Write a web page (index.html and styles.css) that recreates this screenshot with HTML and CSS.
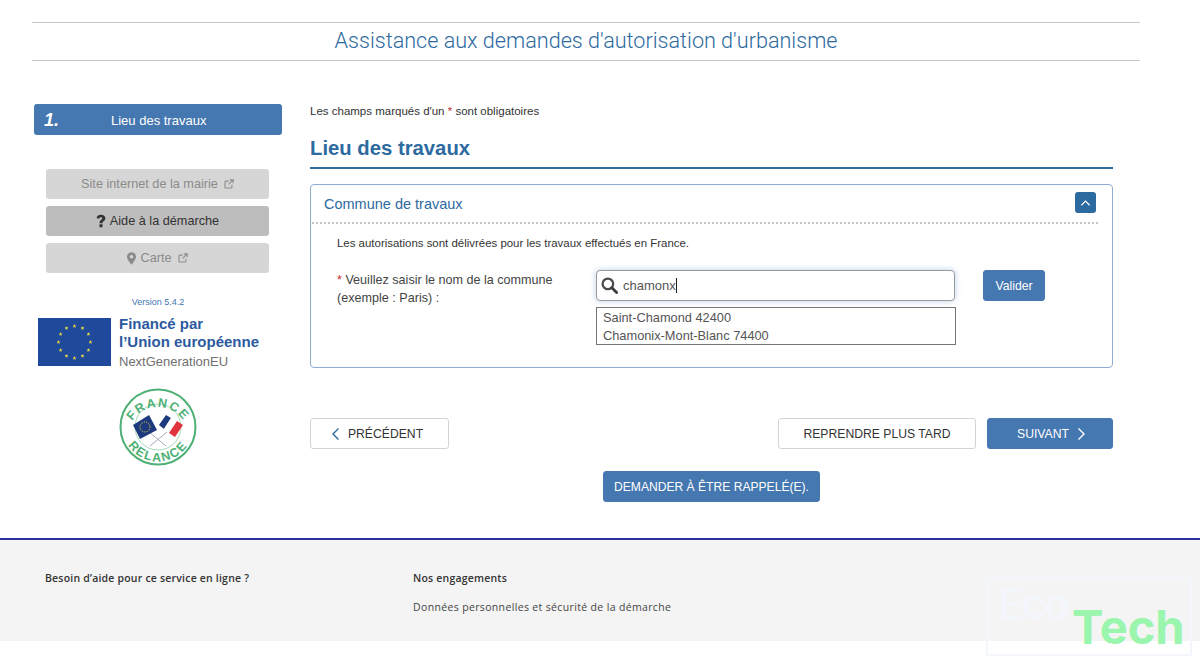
FILE: index.html
```html
<!DOCTYPE html>
<html lang="fr">
<head>
<meta charset="utf-8">
<title>Assistance aux demandes d'autorisation d'urbanisme</title>
<link rel="stylesheet" href="styles.css">
</head>
<body>
<header class="site-header"><h2 class="site-title">Assistance aux demandes d'autorisation d'urbanisme</h2></header>
<div class="layout">
  <aside class="sidebar">
    <div class="step"><span class="step-num">1.</span><span class="step-label">Lieu des travaux</span></div>
    <nav class="links">
      <a class="link muted">Site internet de la mairie <svg class="ext" viewBox="0 0 12 12"><path d="M9.5 7v3a.8.8 0 0 1-.8.8H2a.8.8 0 0 1-.8-.8V3.300A.8.8 0 0 1 2 2.500h3.500M7 1h4v4M11 1 5.500 6.500" fill="none" stroke="currentColor" stroke-width="1.300"/></svg></a>
      <a class="link strong"><svg class="q" viewBox="0 0 10 14"><path d="M.6 4.300C.6 2 2.500.7 4.900.7 7.400.7 9.400 2 9.400 4.200 9.400 6.900 6.500 6.900 6.500 9.200H3.500C3.500 5.900 6.200 5.900 6.200 4.300 6.200 3.600 5.700 3.200 4.900 3.200 4 3.200 3.600 3.700 3.500 4.600ZM3.500 10.300h3V13.300h-3Z" fill="currentColor"/></svg> Aide à la démarche</a>
      <a class="link muted"><svg class="pin" viewBox="0 0 10 14"><path fill-rule="evenodd" d="M5 0a5 5 0 0 1 5 5c0 2.800-3.200 6.700-5 9-1.800-2.300-5-6.200-5-9a5 5 0 0 1 5-5Zm0 3a2 2 0 1 0 0 4 2 2 0 0 0 0-4Z" fill="currentColor"/></svg> Carte <svg class="ext" viewBox="0 0 12 12"><path d="M9.500 7v3a.8.8 0 0 1-.8.8H2a.8.8 0 0 1-.8-.8V3.300A.8.8 0 0 1 2 2.500h3.500M7 1h4v4M11 1 5.500 6.500" fill="none" stroke="currentColor" stroke-width="1.300"/></svg></a>
    </nav>
    <p class="version">Version 5.4.2</p>
    <div class="eu">
      <svg class="eu-flag" viewBox="0 0 73 48">
        <defs><path id="eu-star" d="M0-2 .5-.6 2-.6.8.3 1.200 1.700 0 .9-1.200 1.700-.8.3-2-.6-.5-.6Z"/></defs>
        <rect width="73" height="48" fill="#1f4a9c"/>
        <g fill="#f6e43c">
          <use href="#eu-star" x="36.500" y="8"/><use href="#eu-star" x="44.500" y="10.100"/><use href="#eu-star" x="50.400" y="16"/><use href="#eu-star" x="52.500" y="24"/><use href="#eu-star" x="50.400" y="32"/><use href="#eu-star" x="44.500" y="37.900"/><use href="#eu-star" x="36.500" y="40"/><use href="#eu-star" x="28.500" y="37.900"/><use href="#eu-star" x="22.600" y="32"/><use href="#eu-star" x="20.500" y="24"/><use href="#eu-star" x="22.600" y="16"/><use href="#eu-star" x="28.500" y="10.100"/>
        </g>
      </svg>
      <div class="eu-text">
        <div class="eu-main">Financé par<br>l’Union européenne</div>
        <div class="eu-sub">NextGenerationEU</div>
      </div>
    </div>
    <svg class="relance" viewBox="0 0 78 78">
      <circle cx="39" cy="39" r="37.500" fill="#fff" stroke="#4eb075" stroke-width="2"/>
      <circle cx="39" cy="39" r="23" fill="none" stroke="#8fd0a8" stroke-width=".8"/>
      <defs>
        <path id="arc-top" d="M9 44A30.500 30.500 0 0 1 69 44"/>
        <path id="arc-bottom" d="M3.500 38A35.500 35.500 0 0 0 74.500 38"/>
      </defs>
      <text class="relance-text"><textPath href="#arc-top" startOffset="50%" text-anchor="middle">FRANCE</textPath></text>
      <text class="relance-text"><textPath href="#arc-bottom" startOffset="50%" text-anchor="middle">RELANCE</textPath></text>
      <path d="M30 44 47 58M48 44 31 58" stroke="#8a94a8" stroke-width=".8"/>
      <path d="M14 37 30 27 38 42 21 51Z" fill="#1c3a7d"/>
      <circle cx="26" cy="39" r="5" fill="none" stroke="#e2cf45" stroke-width="1" stroke-dasharray="1 1"/>
      <path d="M40 37 47 27 52 30 45 41Z" fill="#1c3a7d"/>
      <path d="M45 41 52 30 58 33 50 45Z" fill="#fff"/>
      <path d="M50 45 58 33 64 37 56 49Z" fill="#e1333d"/>
    </svg>
  </aside>
  <main class="content">
    <p class="required">Les champs marqués d'un <span class="star">*</span> sont obligatoires</p>
    <h1 class="page-title">Lieu des travaux</h1>
    <section class="panel">
      <div class="panel-head">
        <h3 class="panel-title">Commune de travaux</h3>
        <button class="toggle" type="button"><svg viewBox="0 0 12 8"><path d="M1.500 6.500 6 2l4.500 4.500" fill="none" stroke="#fff" stroke-width="1.300"/></svg></button>
      </div>
      <div class="panel-body">
        <p class="notice">Les autorisations sont délivrées pour les travaux effectués en France.</p>
        <div class="field">
          <label class="field-label"><span class="star">*</span> Veuillez saisir le nom de la commune<br>(exemple : Paris) :</label>
          <div class="field-control">
            <div class="search">
              <svg class="search-icon" viewBox="0 0 18 18"><circle cx="7.300" cy="7.300" r="5.600" fill="none" stroke="#4a4a4a" stroke-width="2.400"/><path d="M11.500 11.500 16.500 16.500" stroke="#3c3c3c" stroke-width="3" stroke-linecap="round"/></svg>
              <span class="search-value">chamonx</span><span class="caret"></span>
            </div>
            <ul class="suggestions">
              <li>Saint-Chamond 42400</li>
              <li>Chamonix-Mont-Blanc 74400</li>
            </ul>
          </div>
          <button class="btn primary validate" type="button">Valider</button>
        </div>
      </div>
    </section>
    <div class="actions">
      <button class="btn outline prev" type="button"><svg class="chev" viewBox="0 0 9 14"><path d="M7.500 1.500 2 7l5.500 5.500" fill="none" stroke="#2d6aa0" stroke-width="1.400"/></svg>PRÉCÉDENT</button>
      <div class="actions-right">
        <button class="btn outline later" type="button">REPRENDRE PLUS TARD</button>
        <button class="btn primary next" type="button">SUIVANT<svg class="chev" viewBox="0 0 9 14"><path d="M1.500 1.500 7 7l-5.500 5.500" fill="none" stroke="#fff" stroke-width="1.400"/></svg></button>
      </div>
    </div>
    <div class="callback"><button class="btn primary call" type="button">DEMANDER À ÊTRE RAPPELÉ(E).</button></div>
  </main>
</div>
<footer class="footer">
  <div class="foot-col help"><strong>Besoin d’aide pour ce service en ligne ?</strong></div>
  <div class="foot-col"><strong>Nos engagements</strong><p class="foot-link">Données personnelles et sécurité de la démarche</p></div>
</footer>
<div class="watermark"><span class="eco">Eco</span><span class="tech">Tech</span></div>
</body>
</html>
```

FILE: styles.css
```css
* { box-sizing: border-box; }
html, body { margin: 0; padding: 0; height: 667px; overflow: hidden; background: #fff; }
body { font-family: "Liberation Sans", Arial, sans-serif; color: #333; position: relative; }
p, h1, h2, h3, ul { margin: 0; padding: 0; }

.site-header { margin: 22px 60px 0 32px; height: 39px; border-top: 1px solid #c9c9c9; border-bottom: 1px solid #c9c9c9; text-align: center; }
.site-title { font: 300 21.600px/35px Roboto, sans-serif; color: #2d6aa0; white-space: nowrap; }

.layout { display: flex; margin-top: 43px; padding-left: 34px; height: 434px; }
.sidebar { width: 248px; flex: none; display: flex; flex-direction: column; align-items: center; }
.content { width: 803px; margin-left: 28px; flex: none; }

.step { width: 248px; height: 31px; background: #4577b0; border-radius: 3px; color: #fff; display: flex; align-items: center; position: relative; }
.step-num { font-style: italic; font-weight: 700; font-size: 18px; margin-left: 10px; width: 20px; padding-top: 1px; }
.step-label { font-size: 13px; margin-left: 47px; padding-top: 2px; }

.links { display: flex; flex-direction: column; gap: 7px; margin-top: 34px; margin-right: 1px; }
.link { width: 223px; height: 30px; border-radius: 3px; display: flex; align-items: center; justify-content: center; font-size: 12.700px; gap: 4px; }
.link.muted { background: #d6d6d6; color: #8b8b8b; }
.link.strong { background: #bdbdbd; color: #333; }
.ext { width: 10px; height: 10px; margin-left: 2px; }
.q { width: 10px; height: 14px; }
.pin { width: 9px; height: 13px; }

.version { font-size: 9px; line-height: 11px; color: #3f76ad; margin-top: 24px; }
.eu { display: flex; width: 248px; margin-top: 10px; padding-left: 4px; }
.eu-flag { width: 73px; height: 48px; flex: none; }
.eu-text { margin-left: 8px; margin-top: -3px; }
.eu-main { font-size: 15px; line-height: 18px; font-weight: 700; color: #2c5aa0; white-space: nowrap; }
.eu-sub { font-size: 13px; line-height: 16px; color: #707070; margin-top: 3px; }
.relance { width: 78px; height: 78px; margin-top: 18px; }
.relance-text { font: 700 12.500px "Liberation Sans", sans-serif; letter-spacing: 1.500px; fill: #4eb075; }

.required { font-size: 11.500px; line-height: 14px; }
.star { color: #c9302c; }
.page-title { font-size: 20.300px; line-height: 24px; font-weight: 700; color: #2d6aa0; margin-top: 18px; padding-bottom: 7px; border-bottom: 2px solid #2d6aa0; }

.panel { margin-top: 15px; height: 184px; border: 1.500px solid #8fadcf; border-radius: 4px; }
.panel-head { height: 39px; margin: 0 14px 0 1px; border-bottom: 2px dotted #c4c4c4; display: flex; align-items: center; justify-content: space-between; padding: 0 1px 0 12px; }
.panel-title { font-size: 14.500px; font-weight: 400; color: #2d6aa0; }
.toggle { width: 21px; height: 21px; border: 0; padding: 0; border-radius: 3px; background: #2d6aa0; display: flex; align-items: center; justify-content: center; margin-top: -2px; margin-right: 1px; }
.toggle svg { width: 11px; height: 8px; }
.panel-body { padding: 12px 0 0 26px; }
.notice { font-size: 11.450px; line-height: 14px; color: #333; }
.field { display: flex; margin-top: 20px; }
.field-label { width: 259px; flex: none; font-size: 12.600px; line-height: 18px; color: #444; margin-top: 1px; }
.field-control { width: 360px; flex: none; }
.search { width: 359px; height: 31px; border: 1px solid #9a9a9a; border-radius: 4px; box-shadow: 0 0 6px rgba(100,150,210,.45); display: flex; align-items: center; padding-left: 4px; background: #fff; }
.search-icon { width: 17px; height: 17px; flex: none; }
.search-value { font-size: 13px; margin-left: 5px; color: #555; }
.caret { width: 1px; height: 15px; background: #222; }
.suggestions { list-style: none; margin-top: 6px; height: 38px; border: 1px solid #777; padding: 1px 6px; font-size: 12.800px; line-height: 18px; color: #555; }
.validate { margin-left: 27px; width: 62px; height: 31px; font-size: 12.500px; }

.btn { border-radius: 3px; font-family: "Liberation Sans", Arial, sans-serif; font-size: 12.200px; display: inline-flex; align-items: center; justify-content: center; padding: 0; }
.btn.primary { background: #4577b0; border: 1px solid #4577b0; color: #fff; }
.btn.outline { background: #fff; border: 1px solid #d4d4d4; color: #333; }
.chev { width: 9px; height: 14px; }

.actions { display: flex; justify-content: space-between; margin-top: 50px; }
.actions-right { display: flex; gap: 11px; }
.prev { width: 139px; height: 31px; gap: 8px; padding-right: 5px; }
.later { width: 198px; height: 31px; }
.next { width: 126px; height: 31px; gap: 8px; padding-left: 3px; }
.callback { display: flex; justify-content: center; margin-top: 22px; }
.call { width: 217px; height: 31px; font-size: 12.100px; }

.footer { height: 103px; border-top: 2px solid #2f2f9a; background: #f4f4f4; display: flex; padding: 31px 0 0 45px; font-family: "Open Sans", sans-serif; font-size: 10.500px; color: #333; }
.foot-col { width: 368px; line-height: 14px; }
.foot-col strong { font-weight: 600; letter-spacing: .2px; }
.foot-link { margin-top: 15px; letter-spacing: .35px; color: #444; }

.watermark { position: absolute; left: 986px; top: 577px; width: 206px; height: 79px; border: 2px solid #f3f6fd; font-family: Inter, sans-serif; }
.eco { position: absolute; left: 10px; top: 0; font-size: 41px; line-height: 50px; font-weight: 500; letter-spacing: -1px; color: #f3f6fc; }
.tech { position: absolute; left: 84px; top: 20px; font-size: 47px; line-height: 56px; font-weight: 700; color: #9af5ad; }
```
